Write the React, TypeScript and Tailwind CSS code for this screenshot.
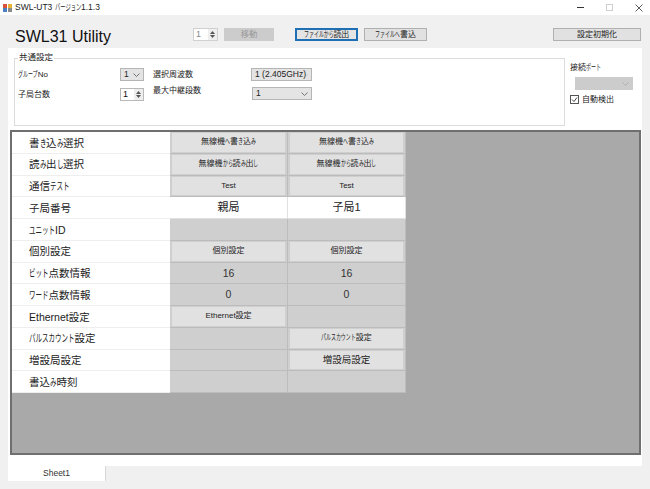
import React from "react";

const FONT = { fontFamily: '"Liberation Sans", "Noto Sans CJK JP", sans-serif' };

function J({ t }: { t: string }) {
  const parts = t.split(/([\u3040-\u30FF]+)/).filter(Boolean);
  return (
    <>
      {parts.map((p, i) =>
        /^[\u3040-\u30FF]/.test(p) ? (
          <span key={i} className="inline-block origin-left scale-x-[0.62] whitespace-nowrap" style={{ width: `${p.length * 0.62}em` }}>{p}</span>
        ) : (
          <span key={i}>{p}</span>
        ),
      )}
    </>
  );
}

function Spin({ value, dim }: { value: string; dim?: boolean }) {
  return (
    <div className={`flex h-[13px] items-center border bg-white ${dim ? "w-[25px] border-[#d0d0d0]" : "w-[24px] border-[#b8b8b8]"}`}>
      <span className={`flex-1 pl-[2px] text-[9px] leading-none ${dim ? "text-[#8a8a8a]" : "text-[#111]"}`}>{value}</span>
      <div className="flex h-full w-[9px] flex-col items-center justify-center gap-[1px] bg-[#eeeeee] text-[#555]">
        <svg width="5" height="3" viewBox="0 0 5 3"><path d="M0 3L2.5 0L5 3Z" fill="currentColor" /></svg>
        <svg width="5" height="3" viewBox="0 0 5 3"><path d="M0 0L2.5 3L5 0Z" fill="currentColor" /></svg>
      </div>
    </div>
  );
}

function Combo({ value, className, dim }: { value: string; className: string; dim?: boolean }) {
  return (
    <div className={`flex h-[13px] items-center justify-between border px-[3px] text-[8.5px] leading-none ${dim ? "border-[#cccccc] bg-[#cccccc]" : "border-[#b5b5b5] bg-[#e4e4e4]"} ${className}`}>
      <span className="whitespace-nowrap text-[#222]">{value}</span>
      <svg width="7" height="4" viewBox="0 0 7 4" className={dim ? "text-[#aaa]" : "text-[#555]"}>
        <path d="M0.5 0.5L3.5 3.5L6.5 0.5" fill="none" stroke="currentColor" strokeWidth="0.8" />
      </svg>
    </div>
  );
}

function TopButton({ label, className }: { label: string; className: string }) {
  return (
    <button className={`flex h-[13px] items-center justify-center whitespace-nowrap text-[8px] leading-none text-[#222] ${className}`}><span><J t={label} /></span></button>
  );
}

function Btn({ label, big }: { label: string; big?: boolean }) {
  return (
    <div className={`mx-[2px] my-[1px] flex flex-1 items-center justify-center whitespace-nowrap bg-[#e1e1e1] leading-none text-[#222] ${big ? "text-[9.5px]" : "text-[8px]"}`}>
      <span><J t={label} /></span>
    </div>
  );
}

type CellT = { t: "btn" | "big" | "white" | "gray"; v?: string };

const rows: { label: string; a: CellT; b: CellT }[] = [
  { label: "書き込み選択", a: { t: "btn", v: "無線機へ書き込み" }, b: { t: "btn", v: "無線機へ書き込み" } },
  { label: "読み出し選択", a: { t: "btn", v: "無線機から読み出し" }, b: { t: "btn", v: "無線機から読み出し" } },
  { label: "通信テスト", a: { t: "btn", v: "Test" }, b: { t: "btn", v: "Test" } },
  { label: "子局番号", a: { t: "white", v: "親局" }, b: { t: "white", v: "子局1" } },
  { label: "ユニットID", a: { t: "gray" }, b: { t: "gray" } },
  { label: "個別設定", a: { t: "btn", v: "個別設定" }, b: { t: "btn", v: "個別設定" } },
  { label: "ビット点数情報", a: { t: "gray", v: "16" }, b: { t: "gray", v: "16" } },
  { label: "ワード点数情報", a: { t: "gray", v: "0" }, b: { t: "gray", v: "0" } },
  { label: "Ethernet設定", a: { t: "btn", v: "Ethernet設定" }, b: { t: "gray" } },
  { label: "パルスカウント設定", a: { t: "gray" }, b: { t: "btn", v: "パルスカウント設定" } },
  { label: "増設局設定", a: { t: "gray" }, b: { t: "big", v: "増設局設定" } },
  { label: "書込み時刻", a: { t: "gray" }, b: { t: "gray" } },
];

function Cell({ c }: { c: CellT }) {
  if (c.t === "btn") return <div className="flex w-[118px] border-b border-r border-[#bcbcbc] bg-[#cfcfcf]"><Btn label={c.v!} /></div>;
  if (c.t === "big") return <div className="flex w-[118px] border-b border-r border-[#bcbcbc] bg-[#cfcfcf]"><Btn label={c.v!} big /></div>;
  if (c.t === "white")
    return <div className="flex w-[118px] items-center justify-center border-b border-r border-[#e0e0e0] bg-white text-[11px] leading-none text-[#222]">{c.v}</div>;
  return <div className="flex w-[118px] items-center justify-center border-b border-r border-[#bcbcbc] bg-[#cfcfcf] text-[10.5px] leading-none text-[#333]">{c.v}</div>;
}

export default function App() {
  return (
    <div className="flex h-[489px] w-[650px] flex-col overflow-hidden bg-[#f0f0f0]" style={FONT}>
      <div className="flex h-[15px] items-center bg-white">
        <svg width="10" height="10" viewBox="0 0 10 10" className="ml-[3px]">
          <rect x="0" y="1" width="4" height="4" fill="#d9533a" />
          <rect x="5" y="1" width="4" height="4" fill="#e8b23a" />
          <rect x="0" y="5" width="4" height="4" fill="#4a7fc0" />
          <rect x="5" y="5" width="4" height="4" fill="#8a8a8a" />
        </svg>
        <span className="ml-[2px] whitespace-nowrap text-[8.5px] leading-none text-[#222]"><J t="SWL-UT3 バージョン1.1.3" /></span>
        <div className="ml-auto flex items-center gap-[22px] pr-[7px]">
          <div className="h-[1px] w-[7px] bg-[#333]" />
          <div className="h-[7px] w-[7px] border border-[#cfcfcf]" />
          <svg width="8" height="8" viewBox="0 0 8 8"><path d="M0.5 0.5L7.5 7.5M7.5 0.5L0.5 7.5" stroke="#333" strokeWidth="0.8" /></svg>
        </div>
      </div>

      <div className="flex h-[33px] items-start">
        <div className="ml-[15px] mt-[14px] w-[178px] whitespace-nowrap text-[16px] leading-none text-[#111]">SWL31 Utility</div>
        <div className="mt-[13px]"><Spin value="1" dim /></div>
        <div className="ml-[6px] mt-[13px] flex h-[13px] w-[50px] items-center justify-center bg-[#cccccc] text-[8.5px] leading-none text-[#999]">移動</div>
        <TopButton label="ファイルから読出" className="ml-[21px] mt-[13px] w-[63px] border-2 border-[#1f6fb5] bg-[#e4e4e4]" />
        <TopButton label="ファイルへ書込" className="ml-[6px] mt-[13px] w-[63px] border border-[#b0b0b0] bg-[#e1e1e1]" />
        <TopButton label="設定初期化" className="ml-[126px] mt-[13px] w-[88px] border border-[#b0b0b0] bg-[#e1e1e1]" />
      </div>

      <div className="mx-[8px] flex h-[418px] flex-col bg-white">
        <div className="flex h-[82px] pl-[6px] pt-[10px]">
          <div className="relative h-[68px] w-[551px] border border-[#dcdcdc]">
            <span className="absolute left-[3px] top-[-6px] bg-white px-[1px] text-[8.5px] leading-none text-[#222]">共通設定</span>
            <div className="flex pl-[3px]">
              <div className="w-[126px]">
                <div className="mt-[9px] flex items-center justify-between">
                  <span className="text-[8px] leading-none text-[#222]"><J t="グループNo" /></span>
                  <Combo value="1" className="w-[24px]" />
                </div>
                <div className="mt-[7px] flex items-center justify-between">
                  <span className="text-[8px] leading-none text-[#222]">子局台数</span>
                  <Spin value="1" />
                </div>
              </div>
              <div className="ml-[9px] w-[98px]">
                <div className="mt-[9px] text-[8px] leading-[13px] text-[#222]">選択周波数</div>
                <div className="mt-[3px] text-[8px] leading-[13px] text-[#222]">最大中継段数</div>
              </div>
              <div>
                <Combo value="1 (2.405GHz)" className="mt-[9px] w-[61px]" />
                <Combo value="1" className="ml-[1px] mt-[6px] w-[60px]" />
              </div>
            </div>
          </div>
          <div className="ml-[5px] flex-1">
            <div className="mt-[5px] text-[8px] leading-[10px] text-[#222]"><J t="接続ポート" /></div>
            <Combo value="" dim className="ml-[5px] mt-[4px] w-[58px]" />
            <div className="mt-[5px] flex items-center gap-[3px]">
              <div className="flex h-[9px] w-[9px] items-center justify-center border border-[#555] bg-white">
                <svg width="7" height="7" viewBox="0 0 7 7"><path d="M1 3.5L3 5.5L6 1.5" fill="none" stroke="#333" strokeWidth="0.9" /></svg>
              </div>
              <span className="text-[8px] leading-none text-[#222]">自動検出</span>
            </div>
          </div>
        </div>

        <div className="ml-[2px] mr-[1px] flex h-[325px] flex-col border-2 border-[#6f6f6f] bg-[#a9a9a9]">
          {rows.map((r) => (
            <div key={r.label} className="flex h-[21.75px]">
              <div className="flex w-[158px] items-center whitespace-nowrap border-b border-[#eeeeee] bg-white pl-[17px] pt-[1px] text-[10.5px] leading-none text-[#222]"><span><J t={r.label} /></span></div>
              <Cell c={r.a} />
              <Cell c={r.b} />
            </div>
          ))}
        </div>
      </div>

      <div className="mx-[8px] flex h-[15px] w-[98px] items-center justify-center border-r border-[#d8d8d8] bg-white text-[8.5px] leading-none text-[#333]">Sheet1</div>
    </div>
  );
}
